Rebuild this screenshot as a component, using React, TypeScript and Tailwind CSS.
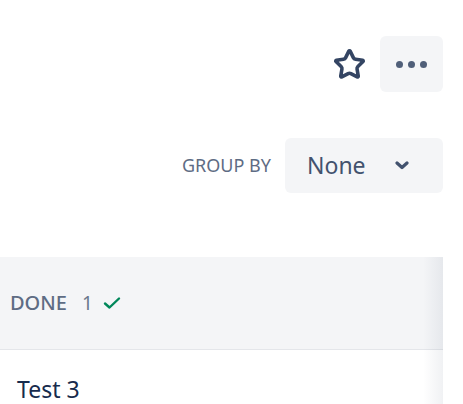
import { Star } from 'lucide-react';

export default function App() {
  return (
    <div className="h-[404px] w-[463px] overflow-hidden bg-white font-['Noto_Sans','Open_Sans',sans-serif]">
      <div className="flex items-center justify-end gap-[14px] pr-[20px] pt-[36px]">
        <Star size={33} strokeWidth={2.6} className="text-[#344563]" />
        <button className="flex h-[56px] w-[63px] items-center justify-center gap-[5px] rounded-[6px] bg-[#f4f5f7]">
          <span className="h-[7px] w-[7px] rounded-full bg-[#505f79]" />
          <span className="h-[7px] w-[7px] rounded-full bg-[#505f79]" />
          <span className="h-[7px] w-[7px] rounded-full bg-[#505f79]" />
        </button>
      </div>

      <div className="mt-[46px] flex items-center justify-end gap-[14px] pr-[20px]">
        <span className="text-[18px] uppercase text-[#5e6c84]">Group by</span>
        <button className="flex h-[55px] w-[158px] items-center justify-between rounded-[6px] bg-[#f4f5f7] pl-[22px] pr-[34px]">
          <span className="text-[23px] text-[#42526e]">None</span>
          <svg width="14" height="9" viewBox="0 0 14 9" fill="none">
            <path d="M2 2l5 4.5L12 2" stroke="#42526e" strokeWidth="3.2" strokeLinecap="round" strokeLinejoin="round" />
          </svg>
        </button>
      </div>

      <div className="relative mt-[64px] w-[443px]">
        <div className="flex h-[93px] items-center border-b border-[#e4e6ea] bg-[#f4f5f7] pl-[10px]">
          <span className="text-[20px] font-medium uppercase text-[#5e6c84]">Done</span>
          <span className="ml-[15px] text-[19px] text-[#6b778c]">1</span>
          <svg className="ml-[10px]" width="18" height="14" viewBox="0 0 18 14" fill="none">
            <path d="M2 7.5l4.5 4L16 2.5" stroke="#00875a" strokeWidth="2.4" strokeLinecap="round" strokeLinejoin="round" />
          </svg>
        </div>
        <div className="pl-[17px] pt-[22px]">
          <span className="text-[23px] text-[#172b4d]">Test 3</span>
        </div>
        <div className="pointer-events-none absolute inset-y-0 right-0 w-[20px] bg-gradient-to-r from-transparent to-[#091e42]/[0.06]" />
      </div>
    </div>
  );
}
